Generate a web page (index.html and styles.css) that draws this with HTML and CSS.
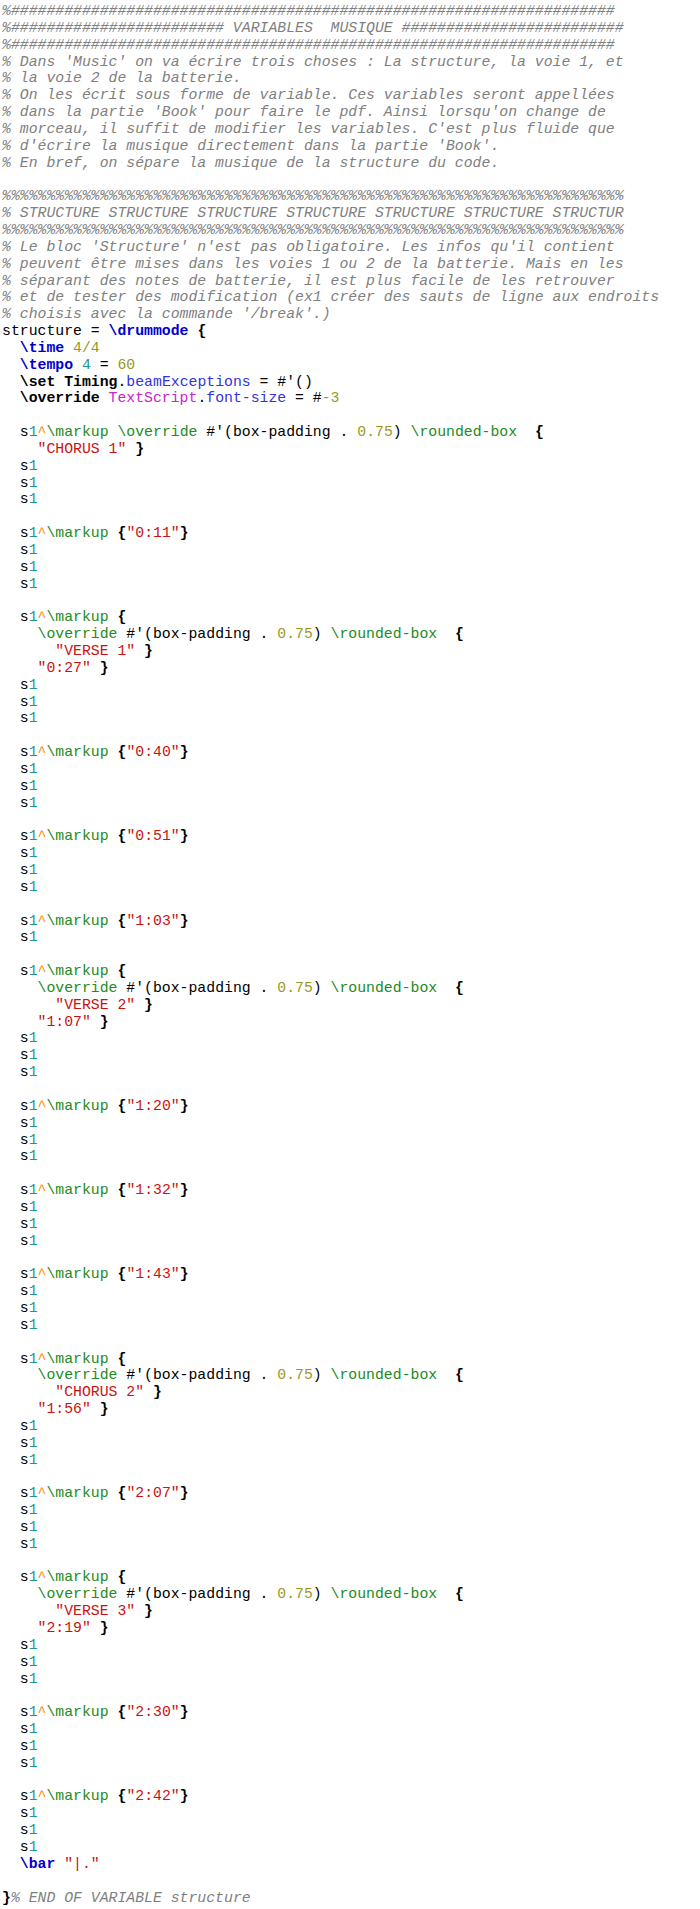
FILE: index.html
```html
<!DOCTYPE html>
<html lang="fr">
<head>
<meta charset="utf-8">
<title>structure.ly</title>
<link rel="stylesheet" href="styles.css">
</head>
<body>
<pre class="code"><span class="c">%####################################################################</span>
<span class="c">%######################## VARIABLES  MUSIQUE #########################</span>
<span class="c">%####################################################################</span>
<span class="c">% Dans 'Music' on va écrire trois choses : La structure, la voie 1, et</span>
<span class="c">% la voie 2 de la batterie.</span>
<span class="c">% On les écrit sous forme de variable. Ces variables seront appellées</span>
<span class="c">% dans la partie 'Book' pour faire le pdf. Ainsi lorsqu'on change de</span>
<span class="c">% morceau, il suffit de modifier les variables. C'est plus fluide que</span>
<span class="c">% d'écrire la musique directement dans la partie 'Book'.</span>
<span class="c">% En bref, on sépare la musique de la structure du code.</span>

<span class="c">%%%%%%%%%%%%%%%%%%%%%%%%%%%%%%%%%%%%%%%%%%%%%%%%%%%%%%%%%%%%%%%%%%%%%%</span>
<span class="c">% STRUCTURE STRUCTURE STRUCTURE STRUCTURE STRUCTURE STRUCTURE STRUCTUR</span>
<span class="c">%%%%%%%%%%%%%%%%%%%%%%%%%%%%%%%%%%%%%%%%%%%%%%%%%%%%%%%%%%%%%%%%%%%%%%</span>
<span class="c">% Le bloc 'Structure' n'est pas obligatoire. Les infos qu'il contient</span>
<span class="c">% peuvent être mises dans les voies 1 ou 2 de la batterie. Mais en les</span>
<span class="c">% séparant des notes de batterie, il est plus facile de les retrouver</span>
<span class="c">% et de tester des modification (ex1 créer des sauts de ligne aux endroits</span>
<span class="c">% choisis avec la commande '/break'.)</span>
structure = <span class="k">\drummode</span> <span class="b">{</span>
  <span class="k">\time</span> <span class="n">4/4</span>
  <span class="k">\tempo</span> <span class="t">4</span> = <span class="n">60</span>
  <span class="b">\set</span> <span class="b">Timing</span>.<span class="p">beamExceptions</span> = #'()
  <span class="b">\override</span> <span class="m">TextScript</span>.<span class="p">font-size</span> = #<span class="n">-3</span>

  s<span class="t">1</span><span class="o">^</span><span class="g">\markup</span> <span class="g">\override</span> #'(box-padding . <span class="n">0.75</span>) <span class="g">\rounded-box</span>  <span class="b">{</span>
    <span class="s">"CHORUS 1"</span> <span class="b">}</span>
  s<span class="t">1</span>
  s<span class="t">1</span>
  s<span class="t">1</span>

  s<span class="t">1</span><span class="o">^</span><span class="g">\markup</span> <span class="b">{</span><span class="s">"0:11"</span><span class="b">}</span>
  s<span class="t">1</span>
  s<span class="t">1</span>
  s<span class="t">1</span>

  s<span class="t">1</span><span class="o">^</span><span class="g">\markup</span> <span class="b">{</span>
    <span class="g">\override</span> #'(box-padding . <span class="n">0.75</span>) <span class="g">\rounded-box</span>  <span class="b">{</span>
      <span class="s">"VERSE 1"</span> <span class="b">}</span>
    <span class="s">"0:27"</span> <span class="b">}</span>
  s<span class="t">1</span>
  s<span class="t">1</span>
  s<span class="t">1</span>

  s<span class="t">1</span><span class="o">^</span><span class="g">\markup</span> <span class="b">{</span><span class="s">"0:40"</span><span class="b">}</span>
  s<span class="t">1</span>
  s<span class="t">1</span>
  s<span class="t">1</span>

  s<span class="t">1</span><span class="o">^</span><span class="g">\markup</span> <span class="b">{</span><span class="s">"0:51"</span><span class="b">}</span>
  s<span class="t">1</span>
  s<span class="t">1</span>
  s<span class="t">1</span>

  s<span class="t">1</span><span class="o">^</span><span class="g">\markup</span> <span class="b">{</span><span class="s">"1:03"</span><span class="b">}</span>
  s<span class="t">1</span>

  s<span class="t">1</span><span class="o">^</span><span class="g">\markup</span> <span class="b">{</span>
    <span class="g">\override</span> #'(box-padding . <span class="n">0.75</span>) <span class="g">\rounded-box</span>  <span class="b">{</span>
      <span class="s">"VERSE 2"</span> <span class="b">}</span>
    <span class="s">"1:07"</span> <span class="b">}</span>
  s<span class="t">1</span>
  s<span class="t">1</span>
  s<span class="t">1</span>

  s<span class="t">1</span><span class="o">^</span><span class="g">\markup</span> <span class="b">{</span><span class="s">"1:20"</span><span class="b">}</span>
  s<span class="t">1</span>
  s<span class="t">1</span>
  s<span class="t">1</span>

  s<span class="t">1</span><span class="o">^</span><span class="g">\markup</span> <span class="b">{</span><span class="s">"1:32"</span><span class="b">}</span>
  s<span class="t">1</span>
  s<span class="t">1</span>
  s<span class="t">1</span>

  s<span class="t">1</span><span class="o">^</span><span class="g">\markup</span> <span class="b">{</span><span class="s">"1:43"</span><span class="b">}</span>
  s<span class="t">1</span>
  s<span class="t">1</span>
  s<span class="t">1</span>

  s<span class="t">1</span><span class="o">^</span><span class="g">\markup</span> <span class="b">{</span>
    <span class="g">\override</span> #'(box-padding . <span class="n">0.75</span>) <span class="g">\rounded-box</span>  <span class="b">{</span>
      <span class="s">"CHORUS 2"</span> <span class="b">}</span>
    <span class="s">"1:56"</span> <span class="b">}</span>
  s<span class="t">1</span>
  s<span class="t">1</span>
  s<span class="t">1</span>

  s<span class="t">1</span><span class="o">^</span><span class="g">\markup</span> <span class="b">{</span><span class="s">"2:07"</span><span class="b">}</span>
  s<span class="t">1</span>
  s<span class="t">1</span>
  s<span class="t">1</span>

  s<span class="t">1</span><span class="o">^</span><span class="g">\markup</span> <span class="b">{</span>
    <span class="g">\override</span> #'(box-padding . <span class="n">0.75</span>) <span class="g">\rounded-box</span>  <span class="b">{</span>
      <span class="s">"VERSE 3"</span> <span class="b">}</span>
    <span class="s">"2:19"</span> <span class="b">}</span>
  s<span class="t">1</span>
  s<span class="t">1</span>
  s<span class="t">1</span>

  s<span class="t">1</span><span class="o">^</span><span class="g">\markup</span> <span class="b">{</span><span class="s">"2:30"</span><span class="b">}</span>
  s<span class="t">1</span>
  s<span class="t">1</span>
  s<span class="t">1</span>

  s<span class="t">1</span><span class="o">^</span><span class="g">\markup</span> <span class="b">{</span><span class="s">"2:42"</span><span class="b">}</span>
  s<span class="t">1</span>
  s<span class="t">1</span>
  s<span class="t">1</span>
  <span class="k">\bar</span> <span class="s">"|."</span>

<span class="b">}</span><span class="c">% END OF VARIABLE structure</span></pre>
</body>
</html>
```
FILE: styles.css
```css
html, body {
  margin: 0;
  padding: 0;
  background: #ffffff;
}

.code {
  margin: 0;
  padding: 3px 0 0 2px;
  font-family: "Liberation Mono", "DejaVu Sans Mono", monospace;
  font-size: 14.8px;
  line-height: 16.85px;
  color: #000000;
  white-space: pre;
}

.c { color: #808080; font-style: italic; }
.k { color: #0000cc; font-weight: bold; }
.b { color: #000000; font-weight: bold; }
.n { color: #999922; }
.t { color: #1f9494; }
.p { color: #3333dd; }
.m { color: #cc22cc; }
.g { color: #228b22; }
.o { color: #ff8c00; }
.s { color: #cc1111; }
```
